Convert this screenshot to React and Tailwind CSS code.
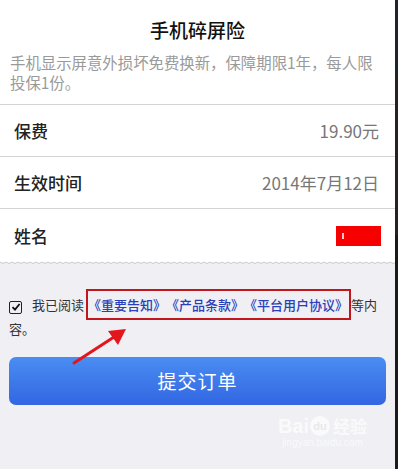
import React from 'react'

const font = { fontFamily: '"Noto Sans CJK SC", "Noto Sans", sans-serif' }

const Row = ({ label, children, last }) => (
  <div className={`flex items-center justify-between pl-[14px] pr-[16px] ${last ? 'h-[54px]' : 'h-[52px] border-b border-[#d4d4d4]'}`}>
    <span className="text-[17px] font-medium text-[#222]">{label}</span>
    {children}
  </div>
)

const Zigzag = () => (
  <svg className="block w-full h-[4px]" preserveAspectRatio="none">
    <defs>
      <pattern id="zz" width="6" height="4" patternUnits="userSpaceOnUse">
        <path d="M0 1 Q3 4 6 1" fill="none" stroke="#c9c9cc" strokeWidth="1" />
      </pattern>
    </defs>
    <rect width="100%" height="4" fill="url(#zz)" />
  </svg>
)

export default function App() {
  return (
    <div className="w-[398px] h-[469px] flex overflow-hidden [text-spacing-trim:space-all]" style={font}>
      <div className="w-[395px] h-full flex flex-col bg-[#efeff4]">
        {/* 保险信息 */}
        <div className="bg-white">
          <h1 className="text-center text-[19px] font-medium text-[#111] pt-[16px] leading-[28px]">手机碎屏险</h1>
          <p className="px-[10px] pt-[8px] pb-[12px] text-[15.4px] leading-[20px] text-[#9a9a9a]">
            手机显示屏意外损坏免费换新，保障期限1年，每人限<br />投保1份。
          </p>
          <div className="border-t border-[#d4d4d4]">
            <Row label="保费">
              <span className="text-[17px] text-[#777]">19.90元</span>
            </Row>
            <Row label="生效时间">
              <span className="text-[17px] text-[#777]">2014年7月12日</span>
            </Row>
            <Row label="姓名" last>
              <span className="w-[45px] h-[20px] bg-[#f70000] flex items-center pl-[6px] mr-[-2px]">
                <span className="w-[2px] h-[6px] bg-[#f7c8c8]" />
              </span>
            </Row>
          </div>
        </div>
        <div className="-mt-[2px]">
          <Zigzag />
        </div>

        {/* 协议 */}
        <div className="relative px-[9px] pt-[28px] text-[13px] leading-[24px] text-[#333]">
          <span className="inline-flex align-[-2px] items-center justify-center w-[13px] h-[13px] border-[1.5px] border-[#222] rounded-[2px] mr-[10px]">
            <svg width="10" height="10" viewBox="0 0 10 10">
              <path d="M1.5 5.2 L4 7.6 L8.6 2" fill="none" stroke="#111" strokeWidth="1.8" />
            </svg>
          </span>
          我已阅读
          <span className="relative ml-[4px] text-[#2a3fb8] font-medium">
            《重要告知》《产品条款》《平台用户协议》
            <span className="absolute -left-[2px] -right-[3px] -top-[6px] -bottom-[6px] border-2 border-[#c0161e]" />
          </span>
          <span className="ml-[3px]">等内</span>
          <br />
          容。
          <svg className="absolute left-[70px] top-[60px]" width="62" height="42" viewBox="0 0 62 42">
            <path d="M4 38 L44 12" stroke="#e3161b" strokeWidth="3" strokeLinecap="round" />
            <path d="M56 4 L38 6 L48 20 Z" fill="#e3161b" />
          </svg>
        </div>

        {/* 提交 */}
        <div className="px-[9px] pt-[16px]">
          <button className="w-full h-[48px] rounded-[7px] bg-gradient-to-b from-[#4a8df2] to-[#3366e2] text-white text-[19px] tracking-[1px]">
            提交订单
          </button>
        </div>

        {/* 水印 */}
        <div className="flex justify-end pr-[28px] pt-[10px] opacity-70">
          <div className="flex flex-col items-center">
            <div className="flex items-center text-white font-bold text-[20px] leading-[22px]" style={{ fontFamily: '"Liberation Sans", sans-serif' }}>
              Bai
              <span className="w-[20px] h-[20px] rounded-full bg-white text-[#e6e6ea] text-[11px] flex items-center justify-center mx-[1px]">du</span>
              <span className="ml-[2px] text-[17px]" style={font}>经验</span>
            </div>
            <span className="text-[10px] text-white leading-[12px]" style={{ fontFamily: '"Liberation Sans", sans-serif' }}>jingyan.baidu.com</span>
          </div>
        </div>
      </div>
      <div className="flex-1 flex flex-col">
        <div className="h-[75px] bg-[#1b2433]" />
        <div className="h-[160px] bg-[#2a2020]" />
        <div className="flex-1 bg-[#1a1a1a]" />
      </div>
    </div>
  )
}
